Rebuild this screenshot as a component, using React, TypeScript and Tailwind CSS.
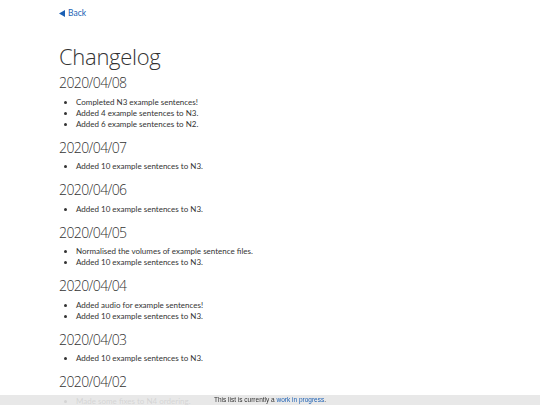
import React from 'react';

const entries: { date: string; items: string[] }[] = [
  {
    date: '2020/04/08',
    items: ['Completed N3 example sentences!', 'Added 4 example sentences to N3.', 'Added 6 example sentences to N2.'],
  },
  { date: '2020/04/07', items: ['Added 10 example sentences to N3.'] },
  { date: '2020/04/06', items: ['Added 10 example sentences to N3.'] },
  {
    date: '2020/04/05',
    items: ['Normalised the volumes of example sentence files.', 'Added 10 example sentences to N3.'],
  },
  { date: '2020/04/04', items: ['Added audio for example sentences!', 'Added 10 example sentences to N3.'] },
  { date: '2020/04/03', items: ['Added 10 example sentences to N3.'] },
  { date: '2020/04/02', items: ['Made some fixes to N4 ordering.', 'Added 10 example sentences to N3.'] },
];

export default function App() {
  return (
    <div className="min-h-screen bg-white text-[#333] font-['Lato','Noto_Sans',sans-serif]">
      <div className="pl-[59px] pt-[8px]">
        <a href="#" className="flex items-center gap-[3px] text-[8.5px] leading-[11px] text-[#1a5fb4]">
          <svg width="6" height="7" viewBox="0 0 6 7" className="fill-current">
            <path d="M6 0 L0 3.5 L6 7 Z" />
          </svg>
          <span>Back</span>
        </a>
        <h1 className="mt-[24px] font-['Open_Sans',sans-serif] text-[22px] font-light leading-[26px] tracking-[-0.3px]">
          Changelog
        </h1>
        {entries.map((e, i) => (
          <section key={e.date} className={i === 0 ? 'mt-[5px]' : 'mt-[9px]'}>
            <h2 className="font-['Open_Sans',sans-serif] text-[14px] font-light leading-[17px] tracking-[-0.6px]">
              {e.date}
            </h2>
            <ul className="mt-[5.5px] list-disc pl-[17px] text-[8px] leading-[11px] marker:text-[#333]">
              {e.items.map((it) => (
                <li key={it}>{it}</li>
              ))}
            </ul>
          </section>
        ))}
        <div className="h-[20px]" />
      </div>
      <div className="fixed bottom-0 inset-x-0 h-[10px] bg-[#e6e6e6]/90 flex items-center justify-center font-['Liberation_Sans',Arial,sans-serif] text-[6.5px] text-[#333]">
        <span>
          This list is currently a <a href="#" className="text-[#1a5fb4]">work in progress</a>.
        </span>
      </div>
    </div>
  );
}
